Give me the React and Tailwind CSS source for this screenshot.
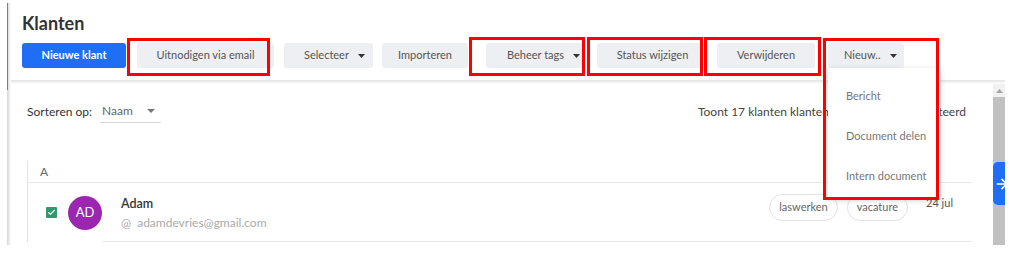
import { ArrowRight, Check } from 'lucide-react';

const Caret = () => (
    <svg width="7" height="4" viewBox="0 0 7 4" className="shrink-0">
        <polygon points="0,0 7,0 3.5,4" fill="#333" />
    </svg>
);

const buttons = [
    { label: 'Uitnodigen via email', className: 'ml-[11px] w-[137px] justify-center' },
    { label: 'Selecteer', caret: true, className: 'ml-[10px] w-[89px] pl-[20px]' },
    { label: 'Importeren', className: 'ml-[9px] w-[86px] justify-center' },
    { label: 'Beheer tags', caret: true, className: 'ml-[18px] w-[97px] pl-[21px]' },
    { label: 'Status wijzigen', className: 'ml-[14px] w-[111px] justify-center' },
    { label: 'Verwijderen', className: 'ml-[9px] w-[98px] justify-center' },
    { label: 'Nieuw..', caret: true, className: 'ml-[13px] w-[76px] pl-[16px]' },
];

// red annotation boxes drawn over the screenshot
const highlights = [
    'left-[127px] top-[38px] w-[143px] h-[38px]',
    'left-[469px] top-[37px] w-[116px] h-[39px]',
    'left-[587px] top-[37px] w-[116px] h-[39px]',
    'left-[704px] top-[37px] w-[117px] h-[39px]',
    'left-[823px] top-[38px] w-[116px] h-[162px]',
];

const App = () => {
    return (
        <div className="relative w-[1014px] h-[257px] bg-white overflow-hidden font-['Lato',sans-serif] pt-[3px]">
            <div className="ml-[7px] w-[998px] h-[242px] flex">
                <div className="w-[4px] bg-gradient-to-r from-[#d4d4d4] to-white">
                    <div className="w-[1px] h-[87px] bg-[#4a80ea]" />
                </div>

                <div className="flex-1 flex flex-col">
                    <div className="h-[77px] pl-[11px] pt-[8px]">
                        <h1 className="text-[18px] leading-[24px] font-bold text-[#333]">Klanten</h1>
                        <div className="flex mt-[8px]">
                            <button className="w-[104px] h-[25px] rounded-[3px] bg-[#1f6ef5] text-white text-[11px] font-bold">
                                Nieuwe klant
                            </button>
                            {buttons.map((b) => (
                                <button
                                    key={b.label}
                                    className={`${b.className} h-[25px] rounded-[3px] bg-[#eeeff2] text-[#555] text-[11px] flex items-center gap-[9px]`}
                                >
                                    {b.label}
                                    {b.caret && <Caret />}
                                </button>
                            ))}
                        </div>
                    </div>
                    <div className="h-[4px] bg-gradient-to-b from-[#e2e2e2] to-white" />

                    <div className="flex-1 flex">
                        <div className="flex-1">
                            <div className="flex items-center justify-between h-[23px] mt-[16px] pl-[16px] pr-[27px]">
                                <div className="flex items-center h-[23px]">
                                    <span className="text-[12px] text-[#333]">Sorteren op:</span>
                                    <div className="ml-[8px] w-[61px] h-[23px] border-b border-[#d6d6d6] flex items-center pl-[2px] pr-[6px] justify-between">
                                        <span className="text-[12px] text-[#666]">Naam</span>
                                        <svg width="8" height="4" viewBox="0 0 8 4">
                                            <polygon points="0,0 8,0 4,4" fill="#777" />
                                        </svg>
                                    </div>
                                </div>
                                <span className="text-[12px] text-[#444] whitespace-nowrap">
                                    Toont 17 klanten klanten, 0 van de 17 geselecteerd
                                </span>
                            </div>

                            <div className="ml-[16px] mt-[38px] w-[945px] border-l border-[#e3e3e3]">
                                <div className="h-[22px] flex items-center pl-[12px] text-[12px] text-[#666] border-b border-[#e8e8e8]">
                                    A
                                </div>
                                <div className="flex items-center h-[59px] pl-[18px]">
                                    <div className="w-[11px] h-[11px] rounded-[1px] bg-[#2e9b6d] flex items-center justify-center">
                                        <Check size={9} color="white" strokeWidth={3} />
                                    </div>
                                    <div className="ml-[11px] w-[34px] h-[34px] rounded-full bg-[#9b27b0] text-white text-[13px] flex items-center justify-center">
                                        AD
                                    </div>
                                    <div className="flex-1 self-stretch border-b border-[#e8e8e8] flex justify-between pl-[19px] pr-[19px]">
                                        <div className="pt-[12px]">
                                            <div className="text-[12.5px] leading-[18px] font-semibold text-[#333]">Adam</div>
                                            <div className="text-[12px] leading-[18px] text-[#aaa] mt-[1px]">
                                                @&nbsp;&nbsp;adamdevries@gmail.com
                                            </div>
                                        </div>
                                        <div className="flex items-start pt-[11px]">
                                            <span className="h-[27px] px-[9px] rounded-full border border-[#e2e2e2] text-[11px] text-[#666] flex items-center">
                                                laswerken
                                            </span>
                                            <span className="ml-[9px] h-[27px] px-[9px] rounded-full border border-[#e2e2e2] text-[11px] text-[#666] flex items-center">
                                                vacature
                                            </span>
                                            <span className="ml-[18px] text-[11px] leading-[18px] text-[#555]">24 jul</span>
                                        </div>
                                    </div>
                                </div>
                            </div>
                        </div>

                        <div className="w-[12px] flex flex-col">
                            <div className="h-[13px] bg-[#f1f1f1] flex items-center justify-center">
                                <svg width="7" height="4" viewBox="0 0 7 4">
                                    <polygon points="0,4 7,4 3.5,0" fill="#a3a3a3" />
                                </svg>
                            </div>
                            <div className="flex-1 bg-[#c1c1c1]" />
                        </div>
                    </div>
                </div>
            </div>

            <div className="absolute left-[993px] top-[162px] w-[12px] h-[43px] rounded-l-[5px] bg-[#1f6ef5] overflow-hidden flex items-center">
                <ArrowRight size={16} color="white" strokeWidth={2.5} className="ml-[1px] shrink-0" />
            </div>

            <div className="absolute left-[828px] top-[68px] w-[112px] h-[130px] bg-white shadow-[0_2px_6px_rgba(0,0,0,0.2)] pt-[8px]">
                {['Bericht', 'Document delen', 'Intern document'].map((item) => (
                    <div key={item} className="h-[40px] flex items-center pl-[18px] text-[11px] text-[#777] whitespace-nowrap">
                        {item}
                    </div>
                ))}
            </div>

            {highlights.map((h) => (
                <div key={h} className={`absolute ${h} border-[3px] border-[#ff0000]`} />
            ))}
        </div>
    );
};

export default App;
